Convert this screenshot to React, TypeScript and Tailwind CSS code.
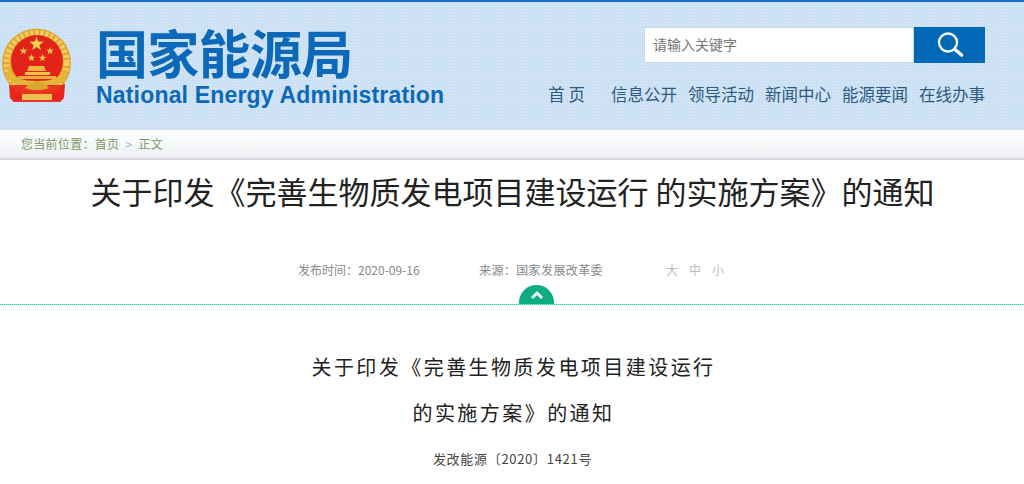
const cjk = "font-['Noto_Sans_CJK_SC','Liberation_Sans',sans-serif]";

// five-pointed star as polygon points
const star = (cx: number, cy: number, r: number) => {
  const pts: string[] = [];
  for (let i = 0; i < 10; i++) {
    const rad = i % 2 === 0 ? r : r * 0.4;
    const a = (Math.PI / 5) * i - Math.PI / 2;
    pts.push(`${(cx + rad * Math.cos(a)).toFixed(2)},${(cy + rad * Math.sin(a)).toFixed(2)}`);
  }
  return pts.join(" ");
};

const Emblem = () => (
  <svg width="72" height="76" viewBox="0 0 72 76" className="shrink-0 mt-[2px] blur-[0.4px]">
    <path d="M8 56h56l-1 14c-3 4-7 4-10 2H19c-3 2-7 2-10-2z" fill="#e8261c" />
    <circle cx="35.500" cy="35" r="34.500" fill="#e0a62f" />
    <circle cx="35.500" cy="35" r="30" fill="none" stroke="#f3cf62" strokeWidth="6" strokeDasharray="3 2" />
    <circle cx="36" cy="33" r="26" fill="#e2231a" />
    <polygon points={star(35.500, 16, 7.500)} fill="#f8d548" />
    <polygon points={star(22.500, 23, 4)} fill="#f5cc48" />
    <polygon points={star(49, 23, 4)} fill="#f5cc48" />
    <polygon points={star(30.500, 30, 4)} fill="#f5cc48" />
    <polygon points={star(41.500, 30, 4)} fill="#f5cc48" />
    <path d="M28 38h15l2 5H26z" fill="#efb93d" />
    <path d="M24 44h25v3H24z" fill="#f1c24d" />
    <path d="M17 48h38v3H17z" fill="#e9ae35" />
    <path d="M5 46c5 11 14 13 31 13s26-2 31-13l-3-6c-4 10-13 13-28 13S12 50 8 40z" fill="#e8b53b" />
    <path d="M10 57h52l-2 17H12z" fill="#e8261c" opacity="0.900" />
    <path d="M21 66h30v6H21z" fill="#eec050" />
    <path d="M24 60c3-4 8-6 12-7 4 1 9 3 12 7-8 3-16 3-24 0z" fill="#dba530" />
  </svg>
);

const SearchIcon = () => (
  <svg width="30" height="30" viewBox="0 0 30 30" fill="none" stroke="#f4f9fd" strokeLinecap="round">
    <circle cx="13" cy="12.500" r="9" strokeWidth="2.400" />
    <path d="M20 19.500l6.500 5.500" strokeWidth="3.600" />
  </svg>
);

const navItems = ["信息公开", "领导活动", "新闻中心", "能源要闻", "在线办事"];

export default function App() {
  return (
    <div className={`w-[1024px] h-[484px] overflow-hidden bg-white ${cjk}`}>
      <header className="h-[130px] border-t-2 border-[#1f6fc0] bg-[#d2e4f6] bg-[linear-gradient(#c9dff3_1px,transparent_1px),linear-gradient(90deg,#c9dff3_1px,transparent_1px)] bg-size-[3px_3px] flex justify-between">
        <div className="flex pl-[1px] pt-[24px]">
          <Emblem />
          <div className="ml-[23px] text-[#0c69ba]">
            <div className="text-[52px] leading-[52px] font-bold tracking-[-0.7px] h-[56px]">国家能源局</div>
            <div className="font-['Liberation_Sans',sans-serif] font-bold text-[23px] leading-[26px] tracking-[0.18px] whitespace-nowrap">
              National Energy Administration
            </div>
          </div>
        </div>
        <div className="pr-[39px] pt-[25px] flex flex-col items-end">
          <div className="flex h-[36px] w-[341px]">
            <div className="w-[270px] bg-white border border-[#cfd8e0] pl-[8px] text-[14px] leading-[33px] text-[#777]">
              请输入关键字
            </div>
            <div className="w-[71px] bg-[#0068b7] flex items-center justify-center">
              <SearchIcon />
            </div>
          </div>
          <nav className="flex gap-[11px] mt-[19px] text-[16.500px] leading-[24px] text-[#2d5a80] whitespace-nowrap">
            <span className="whitespace-pre mr-[15px]">首 页</span>
            {navItems.map((item) => (
              <span key={item}>{item}</span>
            ))}
          </nav>
        </div>
      </header>

      <div className="h-[30px] pl-[21px] bg-gradient-to-b from-white to-[#edf0f3] border-b-2 border-[#d8d8d8] text-[12px] leading-[28px] tracking-[0.3px] text-[#7d9866]">
        您当前位置：首页<span className="mx-[6px] text-[#aaa]">&gt;</span>正文
      </div>

      <h1 className="mt-[11px] pl-[1px] text-center text-[31px] leading-[40px] text-[#222] font-normal whitespace-nowrap">
        关于印发《完善生物质发电项目建设运行 的实施方案》的通知
      </h1>

      <div className="mt-[47px] h-[27px] flex text-[12px] leading-[24px] text-[#888] pl-[298px]">
        <span className="w-[181px]">发布时间：2020-09-16</span>
        <span className="w-[187px] tracking-[0.4px]">来源：国家发展改革委</span>
        <span className="flex gap-[11px] text-[#bbb]">
          <span>大</span>
          <span>中</span>
          <span>小</span>
        </span>
      </div>

      <div className="h-[19px] flex items-end pl-[519px]">
        <div className="w-[35px] h-[19px] rounded-t-full bg-[#0cad80] flex items-center justify-center">
          <svg width="14" height="9" viewBox="0 0 14 9" fill="none" stroke="#eafaf5" strokeWidth="3">
            <path d="M2 8l5-5 5 5" />
          </svg>
        </div>
      </div>
      <div className="h-[1px] bg-[repeating-linear-gradient(90deg,#22cfa0_0,#22cfa0_1px,#a8ecd8_1px,#a8ecd8_2px)]" />

      <div className="mt-[39px] pl-[3px] text-center text-[#222] text-[20px] leading-[46px] tracking-[2.450px] whitespace-nowrap">
        <p>关于印发《完善生物质发电项目建设运行</p>
        <p>的实施方案》的通知</p>
      </div>
      <p className="pl-[1px] text-center text-[13px] leading-[46px] tracking-[0.7px] text-[#444]">发改能源〔2020〕1421号</p>
    </div>
  );
}
